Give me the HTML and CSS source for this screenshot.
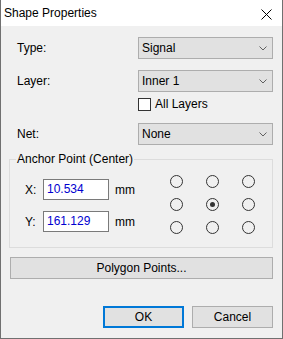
FILE: index.html
```html
<!DOCTYPE html>
<html lang="en">
<head>
    <meta charset="UTF-8">
    <meta name="viewport" content="width=device-width, initial-scale=1.0">
    <title>Shape Properties</title>
    <link rel="stylesheet" href="styles.css">
</head>
<body>
    <div class="window">
        <div class="titlebar">
            <span class="title">Shape Properties</span>
            <svg class="close" width="11" height="11" viewBox="0 0 11 11">
                <path d="M0.5 0.5 L10.5 10.5 M10.5 0.5 L0.5 10.5" stroke="#000" stroke-width="1" fill="none"/>
            </svg>
        </div>

        <div class="content">
            <div class="form">
                <div class="row row-type">
                    <label class="label">Type:</label>
                    <div class="combo">
                        <span>Signal</span>
                        <svg class="chevron" width="8" height="5" viewBox="0 0 8 5"><path d="M0.5 0.5 L4 4 L7.5 0.5" stroke="#606060" fill="none"/></svg>
                    </div>
                </div>
                <div class="row row-layer">
                    <label class="label">Layer:</label>
                    <div class="combo">
                        <span>Inner 1</span>
                        <svg class="chevron" width="8" height="5" viewBox="0 0 8 5"><path d="M0.5 0.5 L4 4 L7.5 0.5" stroke="#606060" fill="none"/></svg>
                    </div>
                </div>
                <div class="row row-check">
                    <span></span>
                    <label class="check"><span class="box"></span>All Layers</label>
                </div>
                <div class="row row-net">
                    <label class="label">Net:</label>
                    <div class="combo">
                        <span>None</span>
                        <svg class="chevron" width="8" height="5" viewBox="0 0 8 5"><path d="M0.5 0.5 L4 4 L7.5 0.5" stroke="#606060" fill="none"/></svg>
                    </div>
                </div>
            </div>

            <div class="group">
                <div class="group-title">Anchor Point (Center)</div>
                <div class="group-body">
                    <div class="coords">
                        <div class="coord">
                            <span class="axis">X:</span>
                            <div class="edit">10.534</div>
                            <span class="unit">mm</span>
                        </div>
                        <div class="coord">
                            <span class="axis">Y:</span>
                            <div class="edit">161.129</div>
                            <span class="unit">mm</span>
                        </div>
                    </div>
                    <div class="radios">
                        <span class="radio"></span>
                        <span class="radio"></span>
                        <span class="radio"></span>
                        <span class="radio"></span>
                        <span class="radio checked"></span>
                        <span class="radio"></span>
                        <span class="radio"></span>
                        <span class="radio"></span>
                        <span class="radio"></span>
                    </div>
                </div>
            </div>

            <div class="btn wide">Polygon Points...</div>

            <div class="actions">
                <div class="btn default">OK</div>
                <div class="btn">Cancel</div>
            </div>
        </div>
    </div>
</body>
</html>
```

FILE: styles.css
```css
body {
    margin: 0;
    background-color: #f0f0f0;
    font-family: "Liberation Sans", Arial, sans-serif;
    font-size: 12px;
    color: #000000;
}
.window {
    width: 283px;
    height: 339px;
    box-sizing: border-box;
    border: 1px solid #707070;
    border-top: none;
    background-color: #f0f0f0;
}
.titlebar {
    height: 26px;
    background-color: #ffffff;
    display: flex;
    align-items: center;
    justify-content: space-between;
    padding: 0 10px 0 3px;
}
.title {
    line-height: 14px;
    margin-top: -1px;
}
.close {
    display: block;
    margin-top: 2px;
}
.content {
    padding: 0 9px 0 8px;
}

/* top form: label column + combo column */
.row {
    display: grid;
    grid-template-columns: 1fr 135px;
    align-items: center;
    padding-left: 8px;
}
.row-type { margin-top: 11px; }
.row-layer { margin-top: 11px; }
.row-check { margin-top: 6px; }
.row-net { margin-top: 12px; }
.label {
    line-height: 14px;
}
.combo {
    height: 22px;
    box-sizing: border-box;
    border: 1px solid #adadad;
    background-color: #e1e1e1;
    display: flex;
    align-items: center;
    justify-content: space-between;
    padding: 0 5px 0 3px;
}
.chevron {
    display: block;
}
.check {
    display: flex;
    align-items: center;
    gap: 4px;
    height: 13px;
    line-height: 13px;
}
.box {
    width: 13px;
    height: 13px;
    box-sizing: border-box;
    border: 1px solid #333333;
    background-color: #ffffff;
}

/* group box */
.group {
    margin-top: 14px;
    border: 1px solid #dcdcdc;
    height: 89px;
    box-sizing: border-box;
}
.group-title {
    width: fit-content;
    margin: -8px 0 0 6px;
    padding: 0 1px;
    line-height: 14px;
    background-color: #f0f0f0;
}
.group-body {
    display: flex;
    align-items: flex-start;
}
.coords {
    display: flex;
    flex-direction: column;
    gap: 11px;
    margin: 13px 0 0 15px;
    width: 145px;
}
.coord {
    display: flex;
    align-items: center;
    height: 21px;
}
.axis {
    width: 18px;
}
.edit {
    width: 66px;
    height: 21px;
    box-sizing: border-box;
    border: 1px solid #7a7a7a;
    background-color: #ffffff;
    color: #0000d0;
    padding-left: 3px;
    line-height: 19px;
}
.unit {
    margin-left: 6px;
}
.radios {
    display: grid;
    grid-template-columns: repeat(3, 13px);
    gap: 10px 23px;
    margin-top: 9px;
}
.radio {
    width: 13px;
    height: 13px;
    box-sizing: border-box;
    border: 1px solid #333333;
    border-radius: 50%;
    display: flex;
    align-items: center;
    justify-content: center;
}
.radio.checked::after {
    content: "";
    width: 5px;
    height: 5px;
    border-radius: 50%;
    background-color: #333333;
}

/* buttons */
.btn {
    height: 22px;
    box-sizing: border-box;
    border: 1px solid #adadad;
    background-color: #e1e1e1;
    display: flex;
    align-items: center;
    justify-content: center;
}
.wide {
    margin: 9px 0 0 1px;
}
.actions {
    display: flex;
    justify-content: flex-end;
    gap: 8px;
    margin-top: 27px;
}
.actions .btn {
    width: 81px;
}
.btn.default {
    border: 2px solid #0078d7;
}
```
